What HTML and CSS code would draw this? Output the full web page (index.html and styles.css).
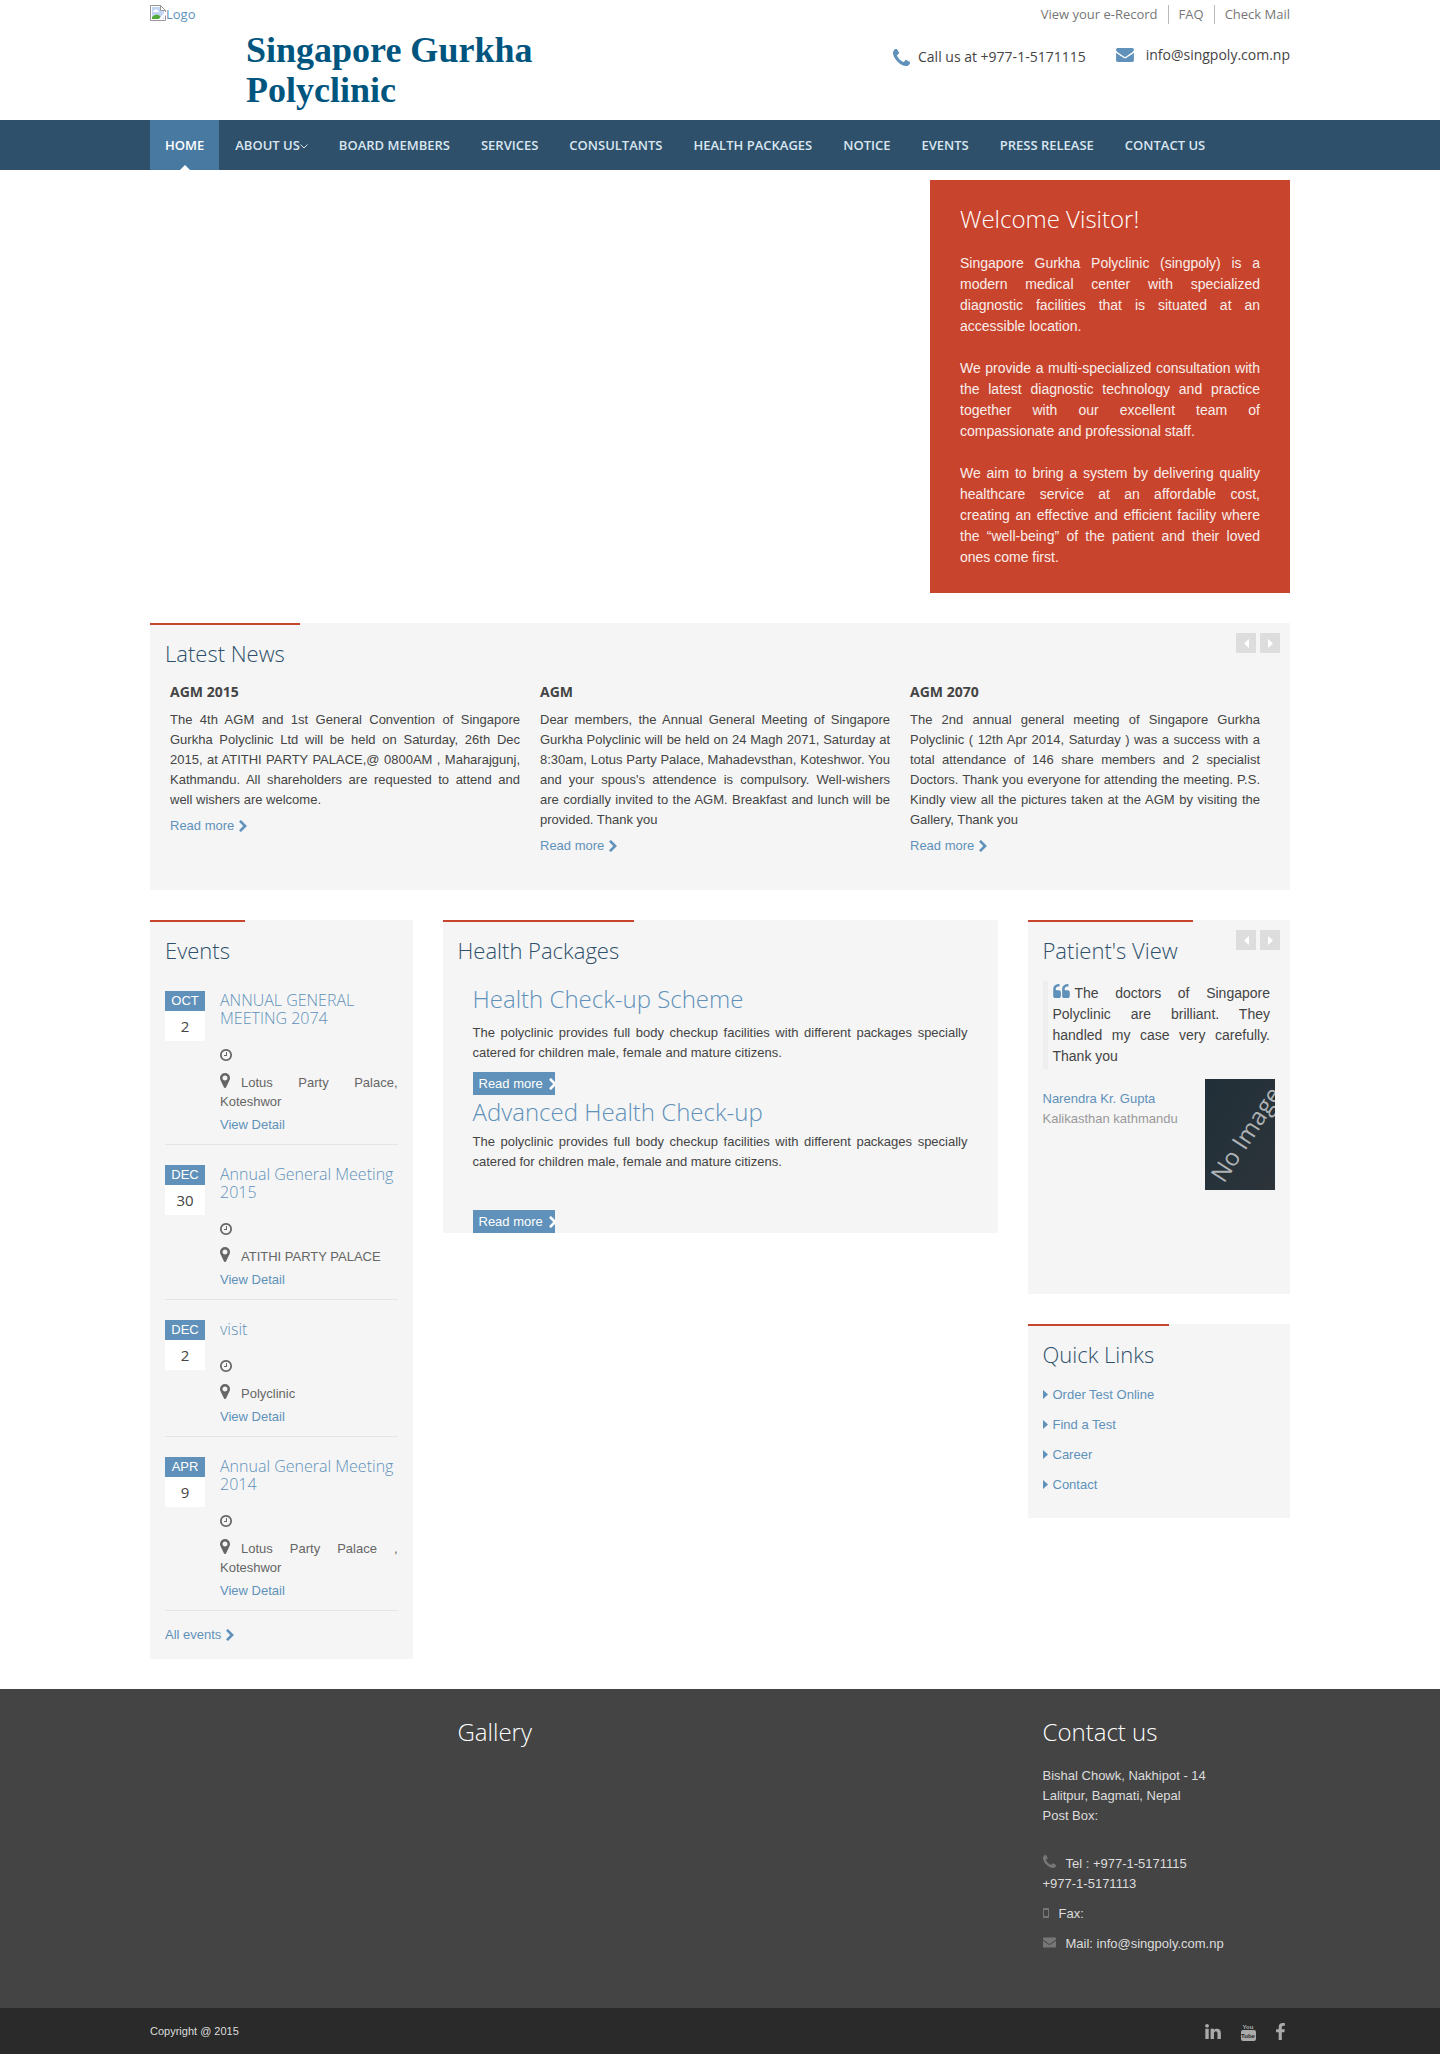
FILE: index.html
```html
<!DOCTYPE html>
<html lang="en">
<head>
<meta charset="utf-8">
<meta name="viewport" content="width=device-width, initial-scale=1">
<title>Singapore Gurkha Polyclinic</title>
<link rel="stylesheet" href="styles.css">
</head>
<body>
<svg class="sprite" aria-hidden="true">
  <symbol id="phone" viewBox="192 128 1408 1408"><path d="M1600 1240q0 27-10 70.500t-21 68.500q-21 50-122 106-94 51-186 51-27 0-53-3.500t-57.500-12.500-47-14.500-55.500-20.500-49-18q-98-35-175-83-127-79-264-216t-216-264q-48-77-83-175-3-9-18-49t-20.500-55.500-14.500-47-12.500-57.500-3.500-53q0-92 51-186 56-101 106-122 25-11 68.500-21t70.500-10q14 0 21 3 18 6 53 76 11 19 30 54t35 63.500 31 53.500q3 4 17.500 25t21.500 35.500 7 28.500q0 20-28.500 50t-62 55-62 53-28.500 46q0 9 5 22.500t8.500 20.500 14 24 11.500 19q76 137 174 235t235 174q2 1 19 11.500t24 14 20.500 8.500 22.500 5q18 0 46-28.500t53-62 55-62 50-28.500q14 0 28.500 7t35.500 21.500 25 17.500q25 15 53.500 31t63.500 35 54 30q70 35 76 53 3 7 3 21z"/></symbol>
  <symbol id="envelope" viewBox="0 256 1792 1408"><path d="M1792 710v794q0 66-47 113t-113 47h-1472q-66 0-113-47t-47-113v-794q44 49 101 87 362 246 497 345 57 42 92.500 65.500t94.500 48 110 24.500h2q51 0 110-24.500t94.500-48 92.500-65.500q170-123 498-345 57-39 100-87zm0-294q0 79-49 151t-122 123q-376 261-468 325-10 7-42.500 31t-54 38.500-52 32.500-57.500 27-50 9h-2q-23 0-50-9t-57.500-27-52-32.500-54-38.500-42.500-31q-91-64-262-182.500t-205-142.500q-62-42-117-115.500t-55-136.500q0-78 41.500-130t118.500-52h1472q65 0 112.500 47t47.500 113z"/></symbol>
  <symbol id="clock" viewBox="128 128 1536 1536"><path d="M1024 544v448q0 14-9 23t-23 9h-320q-14 0-23-9t-9-23v-64q0-14 9-23t23-9h224v-352q0-14 9-23t23-9h64q14 0 23 9t9 23zm416 352q0-148-73-273t-198-198-273-73-273 73-198 198-73 273 73 273 198 198 273 73 273-73 198-198 73-273zm224 0q0 209-103 385.500t-279.500 279.500-385.500 103-385.500-103-279.500-279.500-103-385.500 103-385.500 279.500-279.500 385.500-103 385.500 103 279.500 279.500 103 385.500z"/></symbol>
  <symbol id="marker" viewBox="384 128 1024 1536"><path d="M1152 640q0-106-75-181t-181-75-181 75-75 181 75 181 181 75 181-75 75-181zm256 0q0 109-33 179l-364 774q-16 33-47.500 52t-67.500 19-67.500-19-46.500-52l-365-774q-33-70-33-179 0-212 150-362t362-150 362 150 150 362z"/></symbol>
  <symbol id="chevron" viewBox="346 26 1036 1612"><path d="M1363 877l-742 742q-19 19-45 19t-45-19l-166-166q-19-19-19-45t19-45l531-531-531-531q-19-19-19-45t19-45l166-166q19-19 45-19t45 19l742 742q19 19 19 45t-19 45z"/></symbol>
  <symbol id="quote" viewBox="64 128 1664 1408"><path id="mark" d="M832 960v384q0 80-56 136t-136 56h-384q-80 0-136-56t-56-136v-704q0-104 40.500-198.500t109.500-163.500 163.500-109.500 198.500-40.500h64q26 0 45 19t19 45v128q0 26-19 45t-45 19h-64q-106 0-181 75t-75 181v32q0 40 28 68t68 28h224q80 0 136 56t56 136z"/><use href="#mark" x="896"/></symbol>
  <symbol id="linkedin" viewBox="128 148 1536 1468"><path d="M477 625v991h-330v-991h330zm21-306q1 73-50.500 122t-135.500 49h-2q-82 0-132-49t-50-122q0-74 51.500-122.500t134.500-48.500 133 48.500 51 122.500zm1166 729v568h-329v-530q0-105-40.500-164.500t-126.500-59.500q-63 0-105.500 34.500t-63.500 85.500q-11 30-11 81v553h-329q2-399 2-647t-1-296l-1-48h329v144h-2q20-32 41-56t56.500-52 87-43.500 114.500-15.500q171 0 275 113.500t104 332.500z"/></symbol>
  <symbol id="facebook" viewBox="479 0 864 1664"><path d="M1343 12v264h-157q-86 0-116 36t-30 108v189h293l-39 296h-254v759h-306v-759h-255v-296h255v-218q0-186 104-288.500t277-102.500q147 0 228 12z"/></symbol>
  <symbol id="mobile" viewBox="0 0 6 10"><path fill-rule="evenodd" d="M1 0h4a1 1 0 0 1 1 1v8a1 1 0 0 1-1 1H1a1 1 0 0 1-1-1V1a1 1 0 0 1 1-1zm0 2v6h4V2z"/></symbol>
  <symbol id="left" viewBox="0 0 5 9"><path d="M5 0v9L0 4.500z"/></symbol>
  <symbol id="right" viewBox="0 0 5 9"><path d="M0 0v9l5-4.500z"/></symbol>
</svg>

<header class="container header">
  <div class="brand">
    <a class="logo" href="#">
      <svg width="16" height="16" viewBox="0 0 16 16" aria-hidden="true"><path fill="#fff" stroke="#979797" d="M.5.5h10l5 5v10H.5z"/><path fill="#c3d5f5" d="M2 2h8v4h4v8H2z"/><path fill="#fff" d="M3 7q0-2 2-2 2-2 3 1 1 0 1 1z"/><path fill="#54a93b" d="M2 14v-2q5-5 9 0l-2 2z"/><path fill="#fff" d="M15 7l-7 8h3l5-5V7z"/><path fill="#fff" stroke="#979797" d="M10.500.500v5h5z"/></svg><span>Logo</span>
    </a>
    <h1 class="site-name">Singapore Gurkha Polyclinic</h1>
  </div>
  <div class="header-side">
    <ul class="top-links">
      <li><a href="#">View your e-Record</a></li>
      <li><a href="#">FAQ</a></li>
      <li><a href="#">Check Mail</a></li>
    </ul>
    <div class="header-contact">
      <p class="call"><svg class="blue" width="17" height="17"><use href="#phone"/></svg>Call us at +977-1-5171115</p>
      <p class="mail"><svg class="blue" width="18" height="14"><use href="#envelope"/></svg><a href="#">info@singpoly.com.np</a></p>
    </div>
  </div>
</header>

<nav class="nav">
  <ul class="container">
    <li class="active"><a href="#">HOME</a></li>
    <li><a href="#">ABOUT US<svg width="8" height="5" viewBox="0 0 8 5" aria-hidden="true"><path d="M.5.5L4 4 7.500.500" fill="none" stroke="currentColor"/></svg></a></li>
    <li><a href="#">BOARD MEMBERS</a></li>
    <li><a href="#">SERVICES</a></li>
    <li><a href="#">CONSULTANTS</a></li>
    <li><a href="#">HEALTH PACKAGES</a></li>
    <li><a href="#">NOTICE</a></li>
    <li><a href="#">EVENTS</a></li>
    <li><a href="#">PRESS RELEASE</a></li>
    <li><a href="#">CONTACT US</a></li>
  </ul>
</nav>

<main class="container">
  <section class="welcome">
    <h2>Welcome Visitor!</h2>
    <p>Singapore Gurkha Polyclinic (singpoly) is a modern medical center with specialized diagnostic facilities that is situated at an accessible location.</p>
    <p>We provide a multi-specialized consultation with the latest diagnostic technology and practice together with our excellent team of compassionate and professional staff.</p>
    <p>We aim to bring a system by delivering quality healthcare service at an affordable cost, creating an effective and efficient facility where the “well-being” of the patient and their loved ones come first.</p>
  </section>

  <section class="panel news">
    <div class="panel-head">
      <h2>Latest News</h2>
      <div class="pager">
        <button type="button" aria-label="Previous news"><svg width="5" height="9"><use href="#left"/></svg></button>
        <button type="button" aria-label="Next news"><svg width="5" height="9"><use href="#right"/></svg></button>
      </div>
    </div>
    <div class="news-list">
      <article>
        <h3>AGM 2015</h3>
        <p>The 4th AGM and 1st General Convention of Singapore Gurkha Polyclinic Ltd will be held on Saturday, 26th Dec 2015, at ATITHI PARTY PALACE,@ 0800AM , Maharajgunj, Kathmandu. All shareholders are requested to attend and well wishers are welcome.</p>
        <a class="more" href="#">Read more<svg width="8" height="12"><use href="#chevron"/></svg></a>
      </article>
      <article>
        <h3>AGM</h3>
        <p>Dear members, the Annual General Meeting of Singapore Gurkha Polyclinic will be held on 24 Magh 2071, Saturday at 8:30am, Lotus Party Palace, Mahadevsthan, Koteshwor. You and your spous's attendence is compulsory. Well-wishers are cordially invited to the AGM. Breakfast and lunch will be provided. Thank you</p>
        <a class="more" href="#">Read more<svg width="8" height="12"><use href="#chevron"/></svg></a>
      </article>
      <article>
        <h3>AGM 2070</h3>
        <p>The 2nd annual general meeting of Singapore Gurkha Polyclinic ( 12th Apr 2014, Saturday ) was a success with a total attendance of 146 share members and 2 specialist Doctors. Thank you everyone for attending the meeting. P.S. Kindly view all the pictures taken at the AGM by visiting the Gallery, Thank you</p>
        <a class="more" href="#">Read more<svg width="8" height="12"><use href="#chevron"/></svg></a>
      </article>
    </div>
  </section>

  <div class="columns">
    <div class="column">
      <section class="panel events">
        <div class="panel-head"><h2>Events</h2></div>
        <article class="event">
          <p class="date"><span class="month">OCT</span><span class="day">2</span></p>
          <div class="event-body">
            <h3><a href="#">ANNUAL GENERAL MEETING 2074</a></h3>
            <p class="time"><svg width="12" height="12"><use href="#clock"/></svg></p>
            <p class="place"><svg width="10" height="15"><use href="#marker"/></svg>Lotus Party Palace, Koteshwor</p>
            <a class="detail" href="#">View Detail</a>
          </div>
        </article>
        <article class="event">
          <p class="date"><span class="month">DEC</span><span class="day">30</span></p>
          <div class="event-body">
            <h3><a href="#">Annual General Meeting 2015</a></h3>
            <p class="time"><svg width="12" height="12"><use href="#clock"/></svg></p>
            <p class="place"><svg width="10" height="15"><use href="#marker"/></svg>ATITHI PARTY PALACE</p>
            <a class="detail" href="#">View Detail</a>
          </div>
        </article>
        <article class="event">
          <p class="date"><span class="month">DEC</span><span class="day">2</span></p>
          <div class="event-body">
            <h3><a href="#">visit</a></h3>
            <p class="time"><svg width="12" height="12"><use href="#clock"/></svg></p>
            <p class="place"><svg width="10" height="15"><use href="#marker"/></svg>Polyclinic</p>
            <a class="detail" href="#">View Detail</a>
          </div>
        </article>
        <article class="event">
          <p class="date"><span class="month">APR</span><span class="day">9</span></p>
          <div class="event-body">
            <h3><a href="#">Annual General Meeting 2014</a></h3>
            <p class="time"><svg width="12" height="12"><use href="#clock"/></svg></p>
            <p class="place"><svg width="10" height="15"><use href="#marker"/></svg>Lotus Party Palace , Koteshwor</p>
            <a class="detail" href="#">View Detail</a>
          </div>
        </article>
        <a class="more" href="#">All events<svg width="8" height="12"><use href="#chevron"/></svg></a>
      </section>
    </div>

    <div class="column">
      <section class="panel">
        <div class="panel-head"><h2>Health Packages</h2></div>
        <div class="packages">
          <article class="package">
            <h3><a href="#">Health Check-up Scheme</a></h3>
            <p>The polyclinic provides full body checkup facilities with different packages specially catered for children male, female and mature citizens.</p>
            <a class="more-box" href="#">Read more<svg width="8" height="12"><use href="#chevron"/></svg></a>
          </article>
          <article class="package advanced">
            <h3><a href="#">Advanced Health Check-up</a></h3>
            <p>The polyclinic provides full body checkup facilities with different packages specially catered for children male, female and mature citizens.</p>
            <a class="more-box" href="#">Read more<svg width="8" height="12"><use href="#chevron"/></svg></a>
          </article>
        </div>
      </section>
    </div>

    <div class="column">
      <section class="panel patients">
        <div class="panel-head">
          <h2>Patient's View</h2>
          <div class="pager">
            <button type="button" aria-label="Previous view"><svg width="5" height="9"><use href="#left"/></svg></button>
            <button type="button" aria-label="Next view"><svg width="5" height="9"><use href="#right"/></svg></button>
          </div>
        </div>
        <blockquote><svg class="blue" width="17" height="14"><use href="#quote"/></svg>The doctors of Singapore Polyclinic are brilliant. They handled my case very carefully. Thank you</blockquote>
        <div class="person">
          <p><a href="#">Narendra Kr. Gupta</a><br><span>Kalikasthan kathmandu</span></p>
          <svg width="70" height="111" viewBox="0 0 70 111" role="img" aria-label="No Image">
            <defs><linearGradient id="shade" x2="1" y2="1"><stop stop-color="#202f38"/><stop offset="1" stop-color="#2d343a"/></linearGradient></defs>
            <rect width="70" height="111" fill="url(#shade)"/>
            <text class="no-image" transform="translate(19 105) rotate(-57)">No Image</text>
          </svg>
        </div>
      </section>
      <section class="panel quick">
        <div class="panel-head"><h2>Quick Links</h2></div>
        <ul>
          <li><a href="#"><svg width="5" height="9"><use href="#right"/></svg>Order Test Online</a></li>
          <li><a href="#"><svg width="5" height="9"><use href="#right"/></svg>Find a Test</a></li>
          <li><a href="#"><svg width="5" height="9"><use href="#right"/></svg>Career</a></li>
          <li><a href="#"><svg width="5" height="9"><use href="#right"/></svg>Contact</a></li>
        </ul>
      </section>
    </div>
  </div>
</main>

<footer>
  <div class="footer-main">
    <div class="container">
      <div class="columns">
        <div class="column"></div>
        <div class="column"><h2>Gallery</h2></div>
        <div class="column">
          <h2>Contact us</h2>
          <address>
            <p class="street">Bishal Chowk, Nakhipot - 14<br>Lalitpur, Bagmati, Nepal<br>Post Box:</p>
            <p><svg width="13" height="13"><use href="#phone"/></svg>Tel : +977-1-5171115<br>+977-1-5171113</p>
            <p><svg width="6" height="10"><use href="#mobile"/></svg>Fax:</p>
            <p><svg width="13" height="11"><use href="#envelope"/></svg>Mail: <a href="#">info@singpoly.com.np</a></p>
          </address>
        </div>
      </div>
    </div>
  </div>
  <div class="footer-bar">
    <div class="container">
      <small>Copyright @ 2015</small>
      <ul class="social">
        <li><a href="#" aria-label="LinkedIn"><svg width="16" height="15"><use href="#linkedin"/></svg></a></li>
        <li><a href="#" aria-label="YouTube"><svg width="15" height="19" viewBox="0 0 15 19"><text class="you" x="7" y="7" text-anchor="middle">You</text><rect y="8" width="15" height="11" rx="2"/><text class="tube" x="7" y="16" text-anchor="middle">Tube</text></svg></a></li>
        <li><a href="#" aria-label="Facebook"><svg width="9" height="17"><use href="#facebook"/></svg></a></li>
      </ul>
    </div>
  </div>
</footer>
</body>
</html>
```

FILE: styles.css
```css
* { box-sizing: border-box; }

body {
  margin: 0;
  background: #fff;
  color: #444;
  font: 13px/20px "Liberation Sans", Arial, sans-serif;
}

h1, h2, h3, p, ul, blockquote { margin: 0; padding: 0; }
ul { list-style: none; }
a { color: #6091ba; text-decoration: none; }
svg { fill: currentColor; }
.sprite { display: none; }
.blue { color: #6091ba; }

.container {
  max-width: 1170px;
  margin: 0 auto;
  padding: 0 15px;
}

/* Header */
.header {
  display: flex;
  justify-content: space-between;
  min-height: 120px;
  font-family: "Open Sans", sans-serif;
}
.logo {
  display: flex;
  align-items: flex-start;
  height: 30px;
  padding-top: 5px;
  line-height: 18px;
}
.site-name {
  max-width: 400px;
  padding-left: 96px;
  color: #00557f;
  font: bold 36px/40px "Liberation Serif", "Times New Roman", serif;
}
.top-links {
  display: flex;
  justify-content: flex-end;
  padding-top: 5px;
}
.top-links li { padding: 0 10px; line-height: 19px; }
.top-links li + li { border-left: 1px solid #bbb; }
.top-links li:last-child { padding-right: 0; }
.top-links a { color: #777; }
.header-contact {
  display: flex;
  align-items: flex-start;
  gap: 30px;
  padding-top: 21px;
  font-size: 14px;
}
.header-contact p { display: flex; align-items: center; }
.header-contact a { color: #444; }
.call { gap: 8px; padding-top: 2px; }
.mail { gap: 12px; }

/* Navigation */
.nav { background: #2e506b; }
.nav ul { display: flex; flex-wrap: wrap; gap: 0 1px; }
.nav a {
  display: block;
  padding: 15px;
  color: #d9e6f0;
  font: 600 13px/20px "Open Sans", sans-serif;
}
.nav svg { vertical-align: middle; }
.nav .active { position: relative; background: #4779a1; }
.nav .active a { color: #fff; }
.nav .active::after {
  content: "";
  position: absolute;
  bottom: 0;
  left: 50%;
  margin-left: -5px;
  border: 5px solid transparent;
  border-top: 0;
  border-bottom-color: #fff;
}

/* Welcome */
.welcome {
  max-width: 360px;
  margin: 10px 0 30px auto;
  padding: 26px 30px 25px;
  background: #c9442d;
  color: #faeeeb;
  font-size: 14px;
  line-height: 21px;
  text-align: justify;
}
.welcome h2 {
  color: #fff;
  font: 300 24px/26px "Open Sans", sans-serif;
}
.welcome p { margin-top: 21px; }

/* Panels */
.panel { margin-bottom: 30px; background: #f5f5f5; }
.panel-head {
  display: flex;
  justify-content: space-between;
  align-items: flex-start;
}
.panel-head h2 {
  padding: 16px 15px 0;
  border-top: 2px solid #c9442d;
  color: #2e506b;
  font: 300 22px/24px "Open Sans", sans-serif;
}
.pager { display: flex; gap: 4px; padding: 10px 10px 0 0; }
.pager button {
  display: grid;
  place-items: center;
  width: 20px;
  height: 20px;
  padding: 0;
  border: 0;
  background: #ddd;
  color: #fff;
}
.more { display: inline-flex; align-items: center; gap: 5px; }

/* News */
.news-list {
  display: grid;
  grid-template-columns: repeat(3, 1fr);
  gap: 20px;
  padding: 17px 30px 34px 20px;
}
.news-list h3 { font: bold 14px/20px "Open Sans", sans-serif; }
.news-list p { margin: 8px 0 6px; text-align: justify; }

/* Three-column rows */
.columns {
  display: grid;
  grid-template-columns: minmax(0, 1fr) minmax(0, 2fr) minmax(0, 1fr);
  margin: 0 -15px;
}
.column { padding: 0 15px; }

/* Events */
.events { padding-bottom: 14px; }
.event {
  display: flex;
  gap: 15px;
  margin: 0 15px 20px;
  padding-bottom: 9px;
  border-bottom: 1px solid #e5e5e5;
}
.events .panel-head { margin-bottom: 29px; }
.event .date { flex: 0 0 40px; text-align: center; }
.month { display: block; background: #6091ba; color: #fff; }
.day {
  display: block;
  background: #fff;
  font: 15px/30px "Open Sans", sans-serif;
}
.event-body { flex: 1; min-width: 0; color: #666; }
.event h3 { font: 300 16px/18px "Open Sans", sans-serif; }
.time { height: 20px; margin-top: 18px; padding-top: 4px; }
.time svg { display: block; }
.place { margin: 8px 0 4px; line-height: 19px; text-align: justify; }
.place svg { height: 15px; margin: -4px 11px -1px 0; }
.detail { display: block; }
.event:last-of-type { margin-bottom: 14px; }
.events .more { display: flex; margin-left: 15px; }

/* Health packages */
.packages { padding: 24px 30px 0; text-align: justify; }
.package h3 { font: 300 24px/26px "Open Sans", sans-serif; }
.package p { margin: 11px 0 9px; }
.advanced { margin-top: 4px; }
.advanced p { margin: 7px 0 38px; }
.more-box {
  display: flex;
  align-items: center;
  gap: 6px;
  width: 82px;
  height: 23px;
  padding-left: 6px;
  background: #6091ba;
  color: #fff;
  overflow: hidden;
  white-space: nowrap;
}
.more-box svg { flex: none; }

/* Patient's view */
.patients { padding-bottom: 104px; }
.patients blockquote {
  margin: 19px 20px 10px 15px;
  padding: 2px 0 2px 5px;
  border-left: 5px solid #eee;
  font-size: 14px;
  line-height: 21px;
  text-align: justify;
}
.patients blockquote svg { margin-right: 5px; }
.person {
  display: flex;
  justify-content: space-between;
  padding: 0 15px;
}
.person p { padding-top: 10px; white-space: nowrap; }
.person span { color: #999; }
.person svg { flex: none; }
.no-image { fill: #aeb2b5; font: 24px "Open Sans", sans-serif; }

/* Quick links */
.quick ul { display: grid; gap: 10px; padding: 19px 15px 23px; }
.quick svg { margin-right: 5px; }

/* Footer */
.footer-main {
  padding: 30px 0 54px;
  background: #444;
  color: #ddd;
}
.footer-main .column { padding-left: 30px; }
.footer-main h2 {
  color: #fff;
  font: 300 24px/26px "Open Sans", sans-serif;
}
address { margin-top: 21px; font-style: normal; }
address a { color: inherit; }
address p { margin-bottom: 10px; }
address p:last-child { margin-bottom: 0; }
address .street { margin-bottom: 28px; }
address svg { margin-right: 10px; color: #777; }
.footer-bar { background: #2a2a2a; color: #ddd; }
.footer-bar .container {
  display: flex;
  justify-content: space-between;
  align-items: center;
  min-height: 46px;
}
.footer-bar small { font-size: 11px; }
.social { display: flex; align-items: center; gap: 20px; padding-right: 5px; }
.social a { display: block; color: #aaa; }
.social svg { display: block; }
.you, .tube { font: bold 6px "Liberation Sans Narrow", "Liberation Sans", sans-serif; }
.tube { fill: #2a2a2a; }
```
